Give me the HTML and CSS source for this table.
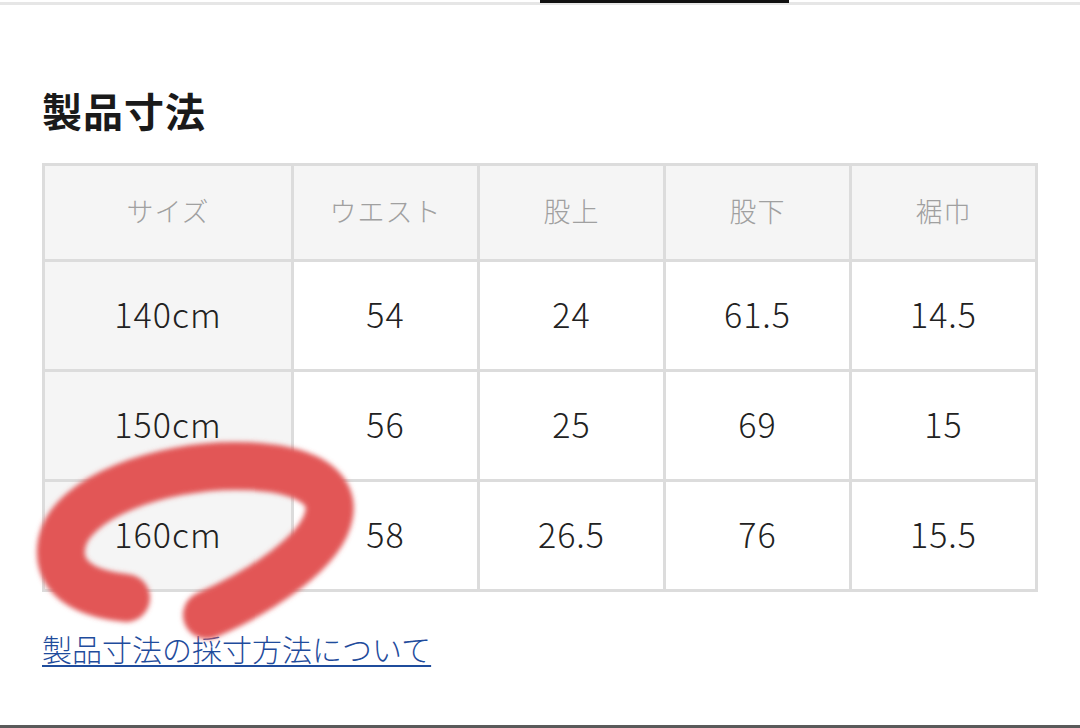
FILE: index.html
```html
<!DOCTYPE html>
<html lang="ja">
<head>
<meta charset="utf-8">
<link rel="stylesheet" href="styles.css">
</head>
<body>
<div class="page">
  <div class="tabbar"><div class="tab-indicator"></div></div>
  <main class="content">
    <h2 class="title">製品寸法</h2>
    <table class="size-table">
      <colgroup>
        <col class="col-size"><col><col><col><col>
      </colgroup>
      <thead>
        <tr><th>サイズ</th><th>ウエスト</th><th>股上</th><th>股下</th><th>裾巾</th></tr>
      </thead>
      <tbody>
        <tr><th>140cm</th><td>54</td><td>24</td><td>61.5</td><td>14.5</td></tr>
        <tr><th>150cm</th><td>56</td><td>25</td><td>69</td><td>15</td></tr>
        <tr><th>160cm</th><td>58</td><td>26.5</td><td>76</td><td>15.5</td></tr>
      </tbody>
    </table>
    <a class="measure-link" href="#">製品寸法の採寸方法について</a>
    <svg class="scribble" width="1080" height="728" viewBox="0 0 1080 728">
      <defs><filter id="soft" x="-20%" y="-20%" width="140%" height="140%"><feGaussianBlur stdDeviation="2.5"/></filter></defs>
      <path d="M126,601 C 80,596 55,578 62,545 C 72,500 160,469 235,469 C 305,469 335,490 329,518 C 322,555 260,595 207,618" fill="none" stroke="#e25656" stroke-width="48" stroke-linecap="round" filter="url(#soft)"/>
    </svg>
  </main>
  <div class="bottom-line"></div>
</div>
</body>
</html>
```
FILE: styles.css
```css
* { box-sizing: border-box; }
html, body { margin: 0; padding: 0; background: #fff; }
body {
  font-family: "Noto Sans CJK JP", "Noto Sans", sans-serif;
  color: #222;
}
.page {
  width: 1080px;
  height: 728px;
  display: flex;
  flex-direction: column;
  overflow: hidden;
}
.tabbar {
  height: 5px;
  border-bottom: 3px solid #e6e6e6;
  display: flex;
  padding-left: 540px;
}
.tab-indicator {
  width: 249px;
  height: 3px;
  background: #111;
}
.content {
  flex: 1;
  position: relative;
  padding: 0 42px;
}
.title {
  margin: 78px 0 26px;
  font-size: 40px;
  line-height: 54px;
  font-weight: 700;
  color: #1a1a1a;
  letter-spacing: 1px;
}
.size-table {
  width: 996px;
  border-collapse: collapse;
  table-layout: fixed;
  border: 3px solid #dcdcdc;
}
.col-size { width: 249px; }
.size-table th,
.size-table td {
  border: 3px solid #dcdcdc;
  text-align: center;
  vertical-align: middle;
  padding: 0 0 5px;
}
.size-table thead th {
  height: 96px;
  background: #f5f5f5;
  color: #a0a0a0;
  font-weight: 300;
  font-size: 27px;
  letter-spacing: 1px;
}
.size-table tbody th,
.size-table tbody td {
  height: 110px;
  font-size: 34px;
  font-weight: 300;
  color: #222;
  letter-spacing: 1px;
}
.size-table tbody th { background: #f5f5f5; }
.measure-link {
  display: inline-block;
  margin-top: 36px;
  font-size: 30px;
  line-height: 40px;
  font-weight: 300;
  color: #1f4c9c;
  text-decoration: underline;
  text-decoration-thickness: 2px;
  text-underline-offset: 4px;
}
.scribble {
  position: absolute;
  left: 0;
  top: -8px;
  pointer-events: none;
}
.bottom-line {
  height: 3px;
  background: #5a5a5a;
}
```
